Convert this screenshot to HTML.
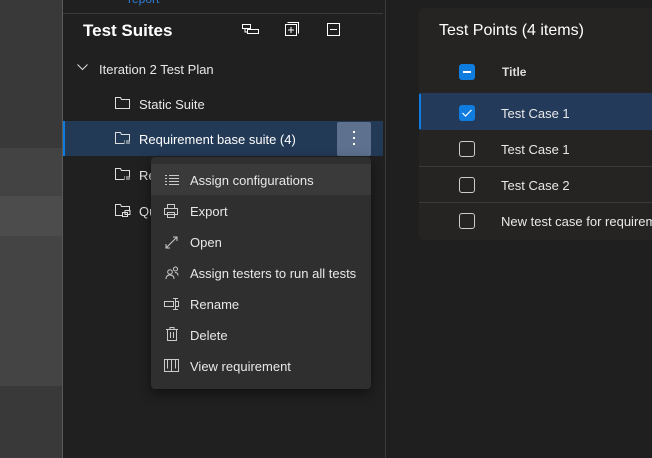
<!DOCTYPE html>
<html><head><meta charset="utf-8"><style>
*{margin:0;padding:0;box-sizing:border-box}
body{width:652px;height:458px;overflow:hidden;background:#1f1f1f;font-family:"Segoe UI","Liberation Sans",sans-serif;color:#e8e8e8;position:relative;font-size:13px}
.a{position:absolute}
svg{position:absolute;overflow:visible}
.t{position:absolute;white-space:nowrap;transform:translateY(2px)}
</style></head><body>
<div class="a" style="left:0;top:0;width:62px;height:148px;background:#393939"></div>
<div class="a" style="left:0;top:148px;width:62px;height:48px;background:#434343"></div>
<div class="a" style="left:0;top:196px;width:62px;height:40px;background:#4c4c4c"></div>
<div class="a" style="left:0;top:236px;width:62px;height:150px;background:#444"></div>
<div class="a" style="left:0;top:386px;width:62px;height:72px;background:#393939"></div>
<div class="a" style="left:62px;top:0;width:1px;height:458px;background:#5a5a5a"></div>
<div class="a" style="left:63px;top:0;width:322px;height:458px;background:#202020"></div>
<div class="a" style="left:385px;top:0;width:1px;height:458px;background:#3a3a3a"></div>
<div class="t" style="left:128px;top:-10px;color:#2f7fd8;font-size:12px">report</div>
<div class="a" style="left:63px;top:13px;width:320px;height:1px;background:#3a3a3a"></div>
<div class="t" style="left:83px;top:19px;font-size:17px;font-weight:bold;color:#fff">Test Suites</div>
<svg style="left:242px;top:24px" width="18" height="14"><rect x="0.5" y="0.5" width="8" height="4" fill="none" stroke="#fff"/><rect x="5.5" y="5.5" width="11" height="4" fill="none" stroke="#fff"/><path d="M3 5v3h2" stroke="#fff" fill="none"/></svg>
<svg style="left:285px;top:22px" width="16" height="16"><rect x="0.5" y="2.5" width="11" height="11" fill="none" stroke="#fff"/><path d="M2.5 0.5h11v11" fill="none" stroke="#fff"/><path d="M6 5v6M3 8h6" stroke="#fff"/></svg>
<svg style="left:327px;top:23px" width="14" height="14"><rect x="0.5" y="0.5" width="12" height="12" fill="none" stroke="#fff"/><path d="M3 6.5h7" stroke="#fff"/></svg>
<svg style="left:77px;top:64px" width="12" height="8"><path d="M0.5 0.5l5 5 5-5" fill="none" stroke="#ddd"/></svg>
<div class="t" style="left:99px;top:60px">Iteration 2 Test Plan</div>
<svg style="left:115px;top:97px" width="16" height="12"><path d="M0.5 0.5h5l1 2h8v9h-14z" fill="none" stroke="#ddd"/></svg>
<div class="t" style="left:139px;top:95px">Static Suite</div>
<div class="a" style="left:63px;top:121px;width:320px;height:35px;background:#233a57"></div>
<div class="a" style="left:63px;top:121px;width:2px;height:35px;background:#0f7ce0"></div>
<svg style="left:115px;top:132px" width="16" height="13"><path d="M9 11.5h-8.5v-11h5l1 2h8v6" fill="none" stroke="#ddd"/><path d="M9 9h1M11 9h4M9 11h1M11 11h4" stroke="#ddd"/></svg>
<div class="t" style="left:139px;top:130px;color:#fff">Requirement base suite (4)</div>
<div class="a" style="left:337px;top:122px;width:34px;height:34px;background:#5e7290;border-radius:2px"></div>
<div class="a" style="left:353px;top:131px;width:2px;height:2px;background:#fff;box-shadow:0 6px 0 #fff,0 12px 0 #fff"></div>
<svg style="left:115px;top:168px" width="16" height="13"><path d="M9 11.5h-8.5v-11h5l1 2h8v6" fill="none" stroke="#ddd"/><path d="M9 9h1M11 9h4M9 11h1M11 11h4" stroke="#ddd"/></svg>
<div class="t" style="left:139px;top:166px">Re</div>
<svg style="left:115px;top:204px" width="16" height="14"><path d="M8 11.5h-7.5v-11h5l1 2h8v5" fill="none" stroke="#ddd"/><rect x="7.5" y="8.5" width="5" height="4" fill="none" stroke="#ddd"/><rect x="10" y="6.5" width="5" height="4" fill="none" stroke="#ddd"/></svg>
<div class="t" style="left:139px;top:202px">Qu</div>
<div class="a" style="left:151px;top:157px;width:220px;height:232px;background:#2f2f2f;border-radius:4px;box-shadow:0 4px 12px rgba(0,0,0,.5)"></div>
<div class="a" style="left:151px;top:164px;width:220px;height:31px;background:#3a3a3a"></div>
<svg style="left:165px;top:175px" width="15" height="10"><path d="M0 0.5h2M4 0.5h10M0 3.5h2M4 3.5h10M0 6.5h2M4 6.5h10M0 9.5h2M4 9.5h10" stroke="#ccc"/></svg>
<div class="t" style="left:190px;top:171px">Assign configurations</div>
<svg style="left:164px;top:204px" width="15" height="14"><path d="M3.5 4.5v-4h7v4M0.5 4.5h13v6h-13zM3.5 8.5h7v5h-7z" fill="#2f2f2f" stroke="#ccc"/></svg>
<div class="t" style="left:190px;top:202px">Export</div>
<svg style="left:165px;top:236px" width="13" height="13"><path d="M1 12L12 1M1 8v4h4M8 1h4v4" fill="none" stroke="#ccc"/></svg>
<div class="t" style="left:190px;top:233px">Open</div>
<svg style="left:165px;top:266px" width="14" height="14"><circle cx="5" cy="6" r="2.3" fill="none" stroke="#ccc"/><path d="M1 13c0-3 2-4 4-4s4 1 4 4" fill="none" stroke="#ccc"/><circle cx="10.5" cy="3" r="2" fill="none" stroke="#ccc"/><path d="M10 6.5c2 0 3 1 3 3" fill="none" stroke="#ccc"/></svg>
<div class="t" style="left:190px;top:264px">Assign testers to run all tests</div>
<svg style="left:164px;top:298px" width="16" height="12"><path d="M0.5 3.5h9v5h-9zM9 .5h5M9 11.5h5M11.5 .5v11M12 3.5h2.5v5H12" fill="none" stroke="#ccc"/></svg>
<div class="t" style="left:190px;top:295px">Rename</div>
<svg style="left:166px;top:327px" width="12" height="14"><path d="M0 2.5h12M4 2.5v-2h4v2M1.5 2.5v11h9v-11M4.5 5v6M7.5 5v6" fill="none" stroke="#ccc"/></svg>
<div class="t" style="left:190px;top:326px">Delete</div>
<svg style="left:164px;top:359px" width="15" height="13"><path d="M0.5 0.5h14v12h-14zM7.5 0.5v12M3.5 .5v9M11.5 .5v9" fill="none" stroke="#ccc"/></svg>
<div class="t" style="left:190px;top:357px">View requirement</div>
<div class="a" style="left:419px;top:8px;width:240px;height:232px;background:#252423;border-radius:4px"></div>
<div class="t" style="left:439px;top:20px;font-size:16px;color:#fff">Test Points (4 items)</div>
<div class="a" style="left:459px;top:64px;width:16px;height:16px;background:#0f7ce0;border-radius:3px"></div>
<div class="a" style="left:463px;top:71px;width:8px;height:2px;background:#fff"></div>
<div class="t" style="left:502px;top:63px;font-size:12px;font-weight:bold;color:#ddd">Title</div>
<div class="a" style="left:419px;top:93px;width:233px;height:37px;background:#243a5a"></div>
<div class="a" style="left:419px;top:94px;width:2px;height:35px;background:#0f7ce0"></div>
<div class="a" style="left:459px;top:105px;width:16px;height:16px;background:#0f7ce0;border-radius:3px"></div>
<svg style="left:462px;top:109px" width="10" height="8"><path d="M.5 4l3 3 6-6" fill="none" stroke="#fff" stroke-width="1.2"/></svg>
<div class="t" style="left:501px;top:104px">Test Case 1</div>
<div class="a" style="left:459px;top:141px;width:16px;height:16px;border:1px solid #ccc;border-radius:3px"></div>
<div class="t" style="left:501px;top:140px">Test Case 1</div>
<div class="a" style="left:419px;top:166px;width:233px;height:1px;background:#3a3a3a"></div>
<div class="a" style="left:459px;top:177px;width:16px;height:16px;border:1px solid #ccc;border-radius:3px"></div>
<div class="t" style="left:501px;top:176px">Test Case 2</div>
<div class="a" style="left:419px;top:202px;width:233px;height:1px;background:#3a3a3a"></div>
<div class="a" style="left:459px;top:213px;width:16px;height:16px;border:1px solid #ccc;border-radius:3px"></div>
<div class="t" style="left:501px;top:212px">New test case for requirement</div>
</body></html>
